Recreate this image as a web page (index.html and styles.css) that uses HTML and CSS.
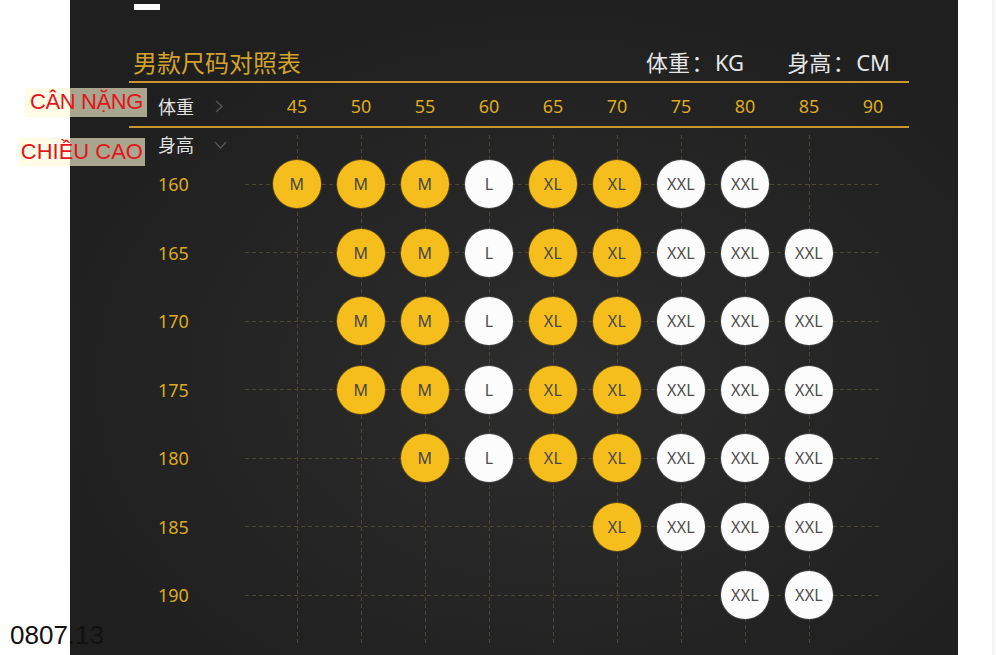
FILE: index.html
```html
<!DOCTYPE html>
<html lang="zh">
<head>
<meta charset="utf-8">
<title>男款尺码对照表</title>
<link rel="stylesheet" href="styles.css">
</head>
<body>
<div class="gutter"></div>
<main class="panel">
  <div class="topbar"></div>
  <div class="titlebar">
    <div class="title">男款尺码对照表</div>
    <div class="units"><span>体重<span class="colon">：</span>KG</span><span>身高<span class="colon">：</span>CM</span></div>
  </div>
  <section class="table">
    <div class="head">
      <div class="axis">体重<svg class="chev" width="8" height="13" viewBox="0 0 8 13"><path d="M1 1l6 5.5L1 12" fill="none" stroke="#555" stroke-width="1.4"/></svg></div>
      <div class="num">45</div><div class="num">50</div><div class="num">55</div><div class="num">60</div><div class="num">65</div>
      <div class="num">70</div><div class="num">75</div><div class="num">80</div><div class="num">85</div><div class="num">90</div>
    </div>
    <div class="body">
      <div class="subhead"><div class="axis">身高<svg class="chev-d" width="13" height="8" viewBox="0 0 13 8"><path d="M1 1l5.5 6L12 1" fill="none" stroke="#555" stroke-width="1.4"/></svg></div></div>
      <div class="row"><div class="h">160</div><div class="dot y">M</div><div class="dot y">M</div><div class="dot y">M</div><div class="dot w">L</div><div class="dot y">XL</div><div class="dot y">XL</div><div class="dot w">XXL</div><div class="dot w">XXL</div><div></div><div></div></div>
      <div class="row"><div class="h">165</div><div></div><div class="dot y">M</div><div class="dot y">M</div><div class="dot w">L</div><div class="dot y">XL</div><div class="dot y">XL</div><div class="dot w">XXL</div><div class="dot w">XXL</div><div class="dot w">XXL</div><div></div></div>
      <div class="row"><div class="h">170</div><div></div><div class="dot y">M</div><div class="dot y">M</div><div class="dot w">L</div><div class="dot y">XL</div><div class="dot y">XL</div><div class="dot w">XXL</div><div class="dot w">XXL</div><div class="dot w">XXL</div><div></div></div>
      <div class="row"><div class="h">175</div><div></div><div class="dot y">M</div><div class="dot y">M</div><div class="dot w">L</div><div class="dot y">XL</div><div class="dot y">XL</div><div class="dot w">XXL</div><div class="dot w">XXL</div><div class="dot w">XXL</div><div></div></div>
      <div class="row"><div class="h">180</div><div></div><div></div><div class="dot y">M</div><div class="dot w">L</div><div class="dot y">XL</div><div class="dot y">XL</div><div class="dot w">XXL</div><div class="dot w">XXL</div><div class="dot w">XXL</div><div></div></div>
      <div class="row"><div class="h">185</div><div></div><div></div><div></div><div></div><div></div><div class="dot y">XL</div><div class="dot w">XXL</div><div class="dot w">XXL</div><div class="dot w">XXL</div><div></div></div>
      <div class="row"><div class="h">190</div><div></div><div></div><div></div><div></div><div></div><div></div><div></div><div class="dot w">XXL</div><div class="dot w">XXL</div><div></div></div>
    </div>
  </section>
</main>
<div class="edge"></div>
<div class="strip"></div>

<div class="tag tag-w">CÂN NẶNG</div>
<div class="tag tag-h">CHIỀU CAO</div>
<div class="stamp">0807.13</div>
</body>
</html>
```

FILE: styles.css
```css
html, body {
  margin: 0;
  padding: 0;
}
body {
  background: #fff;
  display: flex;
  height: 655px;
  overflow: hidden;
  position: relative;
  font-family: "Noto Sans", "Noto Sans CJK SC", sans-serif;
}
.gutter { width: 70px; flex: none; }
.edge { width: 34px; flex: none; }
.strip { width: 3px; flex: none; background: #f4f4f4; }

.panel {
  width: 888px;
  flex: none;
  background: radial-gradient(ellipse 62% 62% at 55% 58%, #2d2d2d 0%, #252525 55%, #1f1f1f 100%);
}
.topbar {
  width: 26px;
  height: 6px;
  background: #fff;
  margin: 4px 0 0 64px;
}
.titlebar {
  height: 71px;
  box-sizing: border-box;
  display: flex;
  justify-content: space-between;
  align-items: flex-end;
  padding: 0 68px 7px 63px;
}
.title {
  font-family: "Noto Sans CJK SC", sans-serif;
  font-size: 24px;
  line-height: 24px;
  color: #d4a22b;
}
.units {
  display: flex;
  gap: 43px;
  font-size: 22px;
  line-height: 24px;
  color: #e6e6e6;
}
.colon {
  display: inline-block;
  width: 25px;
  text-align: center;
  font-family: "Noto Sans CJK SC", sans-serif;
}

.table {
  margin-left: 59px;
  width: 780px;
}
.head {
  display: grid;
  grid-template-columns: 136px repeat(10, 64px);
  height: 43px;
  align-items: center;
  border-top: 2px solid #c9962b;
  border-bottom: 2px solid #c9962b;
}
.axis {
  display: flex;
  align-items: center;
  gap: 21px;
  padding-left: 29px;
  font-size: 18px;
  line-height: 22px;
  color: #e2e2e2;
  font-family: "Noto Sans CJK SC", sans-serif;
}
.head .axis { padding-top: 3px; }
.num {
  text-align: center;
  font-size: 18px;
  color: #dcaa22;
  padding-top: 3px;
}

.body {
  padding-bottom: 24px;
  background-image:
    repeating-linear-gradient(to bottom, #4d4630 0 4px, transparent 4px 7px),
    repeating-linear-gradient(to bottom, #4d4630 0 4px, transparent 4px 7px),
    repeating-linear-gradient(to bottom, #4d4630 0 4px, transparent 4px 7px),
    repeating-linear-gradient(to bottom, #4d4630 0 4px, transparent 4px 7px),
    repeating-linear-gradient(to bottom, #4d4630 0 4px, transparent 4px 7px),
    repeating-linear-gradient(to bottom, #4d4630 0 4px, transparent 4px 7px),
    repeating-linear-gradient(to bottom, #4d4630 0 4px, transparent 4px 7px),
    repeating-linear-gradient(to bottom, #4d4630 0 4px, transparent 4px 7px),
    repeating-linear-gradient(to bottom, #4d4630 0 4px, transparent 4px 7px);
  background-size: 1px 510px;
  background-repeat: no-repeat;
  background-position:
    168px 7px, 232px 7px, 296px 7px, 360px 7px, 424px 7px,
    488px 7px, 552px 7px, 616px 7px, 680px 7px;
}
.subhead {
  height: 22px;
  display: flex;
  align-items: flex-start;
}
.subhead .axis { margin-top: 5px; gap: 20px; }
.chev-d { margin-top: 2px; }

.row {
  display: grid;
  grid-template-columns: 136px repeat(10, 64px);
  height: 68.5px;
  align-items: center;
  justify-items: center;
  background-image: repeating-linear-gradient(to right, #4d4630 0 4px, transparent 4px 7px);
  background-size: 635px 1px;
  background-position: 116px 50%;
  background-repeat: no-repeat;
}
.row .h {
  justify-self: start;
  padding-left: 29px;
  font-size: 18px;
  color: #dcaa22;
}
.dot {
  width: 48px;
  height: 48px;
  border-radius: 50%;
  display: flex;
  align-items: center;
  justify-content: center;
  font-size: 16px;
  letter-spacing: 0.3px;
  color: #474747;
}
.dot.y { background: #f6be1d; box-shadow: 0 0 0 1px rgba(180, 130, 10, 0.35); }
.dot.w { background: #fcfcfc; color: #4d4d4d; box-shadow: 0 0 0 1px rgba(120, 120, 120, 0.35); }

.tag {
  position: absolute;
  box-sizing: border-box;
  font-family: "Liberation Sans", Arial, sans-serif;
  font-size: 22px;
  line-height: 27px;
  color: #e5131b;
  background: rgba(255, 252, 212, 0.61);
  text-align: right;
  white-space: nowrap;
}
.tag-w { left: 25px; top: 88px; width: 122px; height: 29px; padding-right: 4px; letter-spacing: -0.4px; }
.tag-h { left: 18px; top: 138px; width: 127px; height: 28px; padding-right: 2px; }
.stamp {
  position: absolute;
  left: 10px;
  top: 622px;
  font-family: "Liberation Sans", Arial, sans-serif;
  font-size: 26px;
  line-height: 26px;
  color: #111;
}
```
